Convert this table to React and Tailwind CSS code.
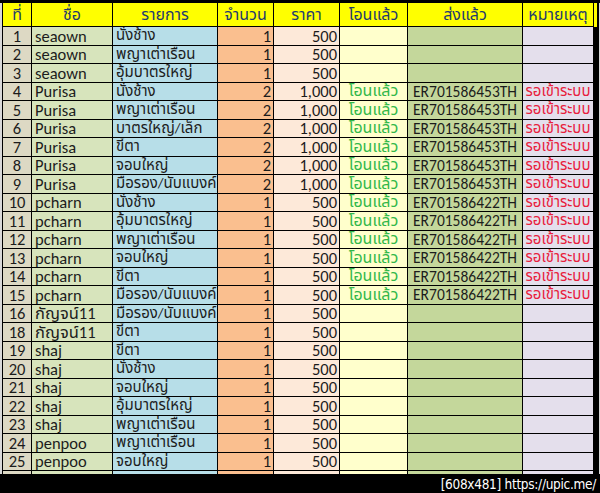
const rows = [
  ["1", "seaown", "นั่งช้าง", "1", "500", "", "", ""],
  ["2", "seaown", "พญาเต่าเรือน", "1", "500", "", "", ""],
  ["3", "seaown", "อุ้มบาตรใหญ่", "1", "500", "", "", ""],
  ["4", "Purisa", "นั่งช้าง", "2", "1,000", "โอนแล้ว", "ER701586453TH", "รอเข้าระบบ"],
  ["5", "Purisa", "พญาเต่าเรือน", "2", "1,000", "โอนแล้ว", "ER701586453TH", "รอเข้าระบบ"],
  ["6", "Purisa", "บาตรใหญ่/เล็ก", "2", "1,000", "โอนแล้ว", "ER701586453TH", "รอเข้าระบบ"],
  ["7", "Purisa", "ขี้ตา", "2", "1,000", "โอนแล้ว", "ER701586453TH", "รอเข้าระบบ"],
  ["8", "Purisa", "จอบใหญ่", "2", "1,000", "โอนแล้ว", "ER701586453TH", "รอเข้าระบบ"],
  ["9", "Purisa", "มือรอง/นับแบงค์", "2", "1,000", "โอนแล้ว", "ER701586453TH", "รอเข้าระบบ"],
  ["10", "pcharn", "นั่งช้าง", "1", "500", "โอนแล้ว", "ER701586422TH", "รอเข้าระบบ"],
  ["11", "pcharn", "อุ้มบาตรใหญ่", "1", "500", "โอนแล้ว", "ER701586422TH", "รอเข้าระบบ"],
  ["12", "pcharn", "พญาเต่าเรือน", "1", "500", "โอนแล้ว", "ER701586422TH", "รอเข้าระบบ"],
  ["13", "pcharn", "จอบใหญ่", "1", "500", "โอนแล้ว", "ER701586422TH", "รอเข้าระบบ"],
  ["14", "pcharn", "ขี้ตา", "1", "500", "โอนแล้ว", "ER701586422TH", "รอเข้าระบบ"],
  ["15", "pcharn", "มือรอง/นับแบงค์", "1", "500", "โอนแล้ว", "ER701586422TH", "รอเข้าระบบ"],
  ["16", "กัญจน์11", "มือรอง/นับแบงค์", "1", "500", "", "", ""],
  ["18", "กัญจน์11", "ขี้ตา", "1", "500", "", "", ""],
  ["19", "shaj", "ขี้ตา", "1", "500", "", "", ""],
  ["20", "shaj", "นั่งช้าง", "1", "500", "", "", ""],
  ["21", "shaj", "จอบใหญ่", "1", "500", "", "", ""],
  ["22", "shaj", "อุ้มบาตรใหญ่", "1", "500", "", "", ""],
  ["23", "shaj", "พญาเต่าเรือน", "1", "500", "", "", ""],
  ["24", "penpoo", "พญาเต่าเรือน", "1", "500", "", "", ""],
  ["25", "penpoo", "จอบใหญ่", "1", "500", "", "", ""],
  // last row is cut off by the footer, only its colours show
  ["", "", "", "", "", "", "", ""],
];

const headers = ["ที่", "ชื่อ", "รายการ", "จำนวน", "ราคา", "โอนแล้ว", "ส่งแล้ว", "หมายเหตุ"];

const cols = "grid grid-cols-[29px_81px_105px_56px_66px_68px_115px_71px]";
const cell = "border-r border-b border-black overflow-hidden whitespace-nowrap leading-none flex items-center";

function App() {
  return (
    <div className="w-[600px] h-[493px] bg-black flex flex-col overflow-hidden font-['Carlito','Lato','Noto_Sans_Thai','Noto_Sans',sans-serif]">
      <div className="h-[3px] shrink-0" />
      <div className="h-[471px] shrink-0 flex overflow-hidden">
        <div className="w-[2px] bg-[#d9d9d9]" />
        <div className="w-[595px] border-l border-black bg-black overflow-hidden">
          <div className={`${cols} h-[24px] bg-[#ffff00] text-[#1f3a6e] text-[16px]`}>
            {headers.map((h) => (
              <div key={h} className={`${cell} justify-center`}>
                {h}
              </div>
            ))}
          </div>
          {rows.map((r, i) => (
            <div key={i} className={`${cols} h-[18.5px] text-[#1c1c1c] text-[16.5px]`}>
              <div className={`${cell} justify-center bg-[#ddd9c4]`}>{r[0]}</div>
              <div className={`${cell} pl-[3px] bg-[#d7e4bc]`}>{r[1]}</div>
              <div className={`${cell} pl-[3px] bg-[#b7dee8] text-[15px]`}>{r[2]}</div>
              <div className={`${cell} justify-end pr-[2px] bg-[#fabf8f]`}>{r[3]}</div>
              <div className={`${cell} justify-end pr-[2px] bg-[#fde9d9]`}>{r[4]}</div>
              <div className={`${cell} justify-center bg-[#ffffcc] text-[#33b84a] text-[16px]`}>{r[5]}</div>
              <div className={`${cell} justify-center bg-[#c4d79b] text-[15.5px]`}>{r[6]}</div>
              <div className={`${cell} justify-center bg-[#e4dfec] text-[#e8203c] text-[15px]`}>{r[7]}</div>
            </div>
          ))}
        </div>
        <div className="w-[2px] bg-black" />
        <div className="flex-1 bg-[#d9d9d9]" />
      </div>
      <div className="flex-1 flex items-center justify-end pr-[4px] text-white text-[13.5px] font-['DejaVu_Sans_Condensed','DejaVu_Sans',sans-serif] tracking-[-0.3px]">
        [608x481] https://upic.me/
      </div>
    </div>
  );
}

export default App;
